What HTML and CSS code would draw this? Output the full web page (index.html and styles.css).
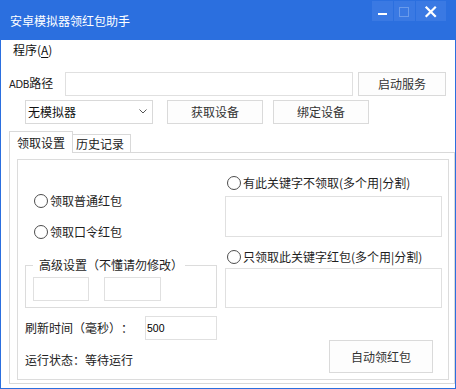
FILE: index.html
```html
<!DOCTYPE html>
<html>
<head>
<meta charset="utf-8">
<title>安卓模拟器领红包助手</title>
<link rel="stylesheet" href="styles.css">
</head>
<body>
<div class="window">
  <div class="titlebar">
    <div class="title">安卓模拟器领红包助手</div>
    <div class="caps">
      <div class="cap cap-min"><svg width="21" height="20" viewBox="0 0 21 20"><rect x="6" y="12" width="9" height="2" fill="#fff"/></svg></div>
      <div class="cap cap-max"><svg width="21" height="20" viewBox="0 0 21 20"><rect x="5.5" y="6.5" width="9" height="9" fill="none" stroke="#6b9bea" stroke-width="1"/></svg></div>
      <div class="cap cap-close"><svg width="30" height="20" viewBox="0 0 30 20"><path d="M10.5 6.5 L19 15 M19 6.5 L10.5 15" stroke="#fff" stroke-width="2.2" stroke-linecap="square"/></svg></div>
    </div>
  </div>
  <div class="menubar"><span class="menu-item">程序(<u>A</u>)</span></div>
  <div class="content">
    <div class="row row-adb">
      <div class="adb-label"><span class="narrow">ADB</span>路径</div>
      <div class="textbox tb-adb"></div>
      <div class="btn btn-start">启动服务</div>
    </div>
    <div class="row row-device">
      <div class="combo"><span class="combo-text">无模拟器</span><svg class="chev" width="8" height="5" viewBox="0 0 8 5"><path d="M0.5 0.5 L4 4 L7.5 0.5" fill="none" stroke="#555" stroke-width="1"/></svg></div>
      <div class="btn btn-get">获取设备</div>
      <div class="btn btn-bind">绑定设备</div>
    </div>
    <div class="tabs">
      <div class="tabstrip">
        <div class="tab tab-active">领取设置</div>
        <div class="tab tab-second">历史记录</div>
      </div>
      <div class="tabpage">
        <div class="frame">
          <div class="columns">
            <div class="col-left">
              <div class="radio radio-1"><span class="circle"></span><span>领取普通红包</span></div>
              <div class="radio radio-2"><span class="circle"></span><span>领取口令红包</span></div>
              <fieldset class="group">
                <legend class="group-title">高级设置<span class="fw fw-open">（</span>不懂请勿修改<span class="fw fw-close">）</span></legend>
                <div class="group-row">
                  <div class="textbox tb-small1"></div>
                  <div class="textbox tb-small2"></div>
                </div>
              </fieldset>
            </div>
            <div class="col-right">
              <div class="radio radio-3"><span class="circle"></span><span>有此关键字不领取(多个用|分割)</span></div>
              <div class="textbox area area-1"></div>
              <div class="radio radio-4"><span class="circle"></span><span>只领取此关键字红包(多个用|分割)</span></div>
              <div class="textbox area area-2"></div>
            </div>
          </div>
          <div class="bottom">
            <div class="refresh-row">
              <span class="refresh-label">刷新时间<span class="fw fw-open">（</span>毫秒<span class="fw fw-close">）</span><span class="fw fw-close">：</span></span>
              <div class="textbox tb-refresh"><span class="num">500</span></div>
            </div>
            <div class="status-row">
              <span class="status-label">运行状态<span class="fw fw-close">：</span>等待运行</span>
              <div class="btn btn-auto">自动领红包</div>
            </div>
          </div>
        </div>
      </div>
    </div>
  </div>
</div>
</body>
</html>
```

FILE: styles.css
```css
* { box-sizing: border-box; }
html, body { margin: 0; padding: 0; background: #fff; }
body {
  font-family: "Noto Sans CJK SC", "Noto Sans", sans-serif;
  font-size: 12px;
  color: #1e1e1e;
  text-spacing-trim: space-all;
  font-feature-settings: "chws" 0, "halt" 0, "palt" 0;
}
.fw { display: inline-block; width: 12px; }
.fw-open { text-align: right; }
.fw-close { text-align: left; }
.window {
  width: 456px;
  height: 389px;
  border: 1px solid #2b6fdf;
  border-top: none;
  display: flex;
  flex-direction: column;
  background: #fff;
  overflow: hidden;
}
.titlebar {
  height: 40px;
  flex: none;
  background: #2b6fdf;
  margin: 0 -1px;
  padding: 0 10px 0 10px;
  display: flex;
  align-items: flex-start;
}
.title {
  flex: 1;
  color: #fff;
  font-size: 12px;
  line-height: 16px;
  margin-top: 13px;
}
.caps { display: flex; gap: 1px; margin-top: 1px; }
.cap { width: 21px; height: 20px; background: #3a79e3; display: flex; }
.cap-close { width: 30px; }
.cap svg { display: block; }

.menubar {
  height: 22px;
  flex: none;
  padding-left: 12px;
  line-height: 20px;
  color: #111;
}
.menu-item u { text-decoration-thickness: 1px; text-underline-offset: 2px; }

.content { display: flex; flex-direction: column; flex: 1; }
.row { display: flex; align-items: center; height: 24px; flex: none; }
.row-adb { margin-top: 10px; }
.row-device { margin-top: 4px; }

.adb-label { width: 56px; margin-left: 8px; color: #222; line-height: 16px; }
.narrow {
  font-family: "Liberation Sans Narrow", "DejaVu Sans Condensed", "Liberation Sans", sans-serif;
  font-size: 11px;
  letter-spacing: -0.3px;
}
.textbox { border: 1px solid #e0e0e0; background: #fff; }
.tb-adb { width: 288px; height: 24px; }
.btn {
  border: 1px solid #dadada;
  background: #fdfdfd;
  color: #333;
  display: flex;
  align-items: center;
  justify-content: center;
  height: 24px;
  line-height: 16px;
}
.btn-start { width: 88px; margin-left: 5px; }

.combo {
  width: 128px;
  height: 24px;
  margin-left: 24px;
  border: 1px solid #d9d9d9;
  display: flex;
  align-items: center;
  padding-left: 2px;
  padding-right: 5px;
  color: #111;
}
.combo-text { flex: 1; line-height: 16px; }
.chev { display: block; margin-top: -1px; }
.btn-get { width: 96px; margin-left: 14px; }
.btn-bind { width: 96px; margin-left: 10px; }

.tabs {
  margin-top: 7px;
  margin-left: 8px;
  display: flex;
  flex-direction: column;
  flex: none;
}
.tabstrip { display: flex; align-items: flex-end; height: 21px; position: relative; z-index: 1; }
.tab {
  border: 1px solid #d9d9d9;
  border-bottom: none;
  background: #fff;
  line-height: 16px;
  color: #222;
}
.tab-active { width: 64px; height: 22px; margin-bottom: -1px; padding: 3px 0 0 7px; }
.tab-second { width: 58px; height: 18px; border-left: none; padding: 1px 0 0 3px; }

.tabpage {
  border: 1px solid #d9d9d9;
  height: 232px;
  width: 446px;
  padding: 6px 5px 3px 7px;
}
.frame {
  border: 1px solid #dcdcdc;
  height: 221px;
  display: flex;
  flex-direction: column;
}
.columns { display: flex; gap: 8px; padding: 15px 0 0 7px; }
.col-left { width: 192px; display: flex; flex-direction: column; }
.col-right { width: 217px; display: flex; flex-direction: column; }

.radio { display: flex; align-items: center; height: 16px; line-height: 16px; color: #1e1e1e; }
.circle {
  width: 14px;
  height: 14px;
  border: 1px solid #4d4d4d;
  border-radius: 50%;
  background: #fff;
  margin-right: 2px;
  flex: none;
}
.radio-1 { margin-top: 18px; padding-left: 9px; }
.radio-2 { margin-top: 15px; padding-left: 9px; }
.radio-3 { padding-left: 2px; }
.radio-4 { margin-top: 12px; padding-left: 2px; }

.group {
  margin: 17px 0 0 0;
  padding: 4px 0 6px 7px;
  border: 1px solid #dcdcdc;
  min-width: 0;
}
.group-title { padding: 0 2px 0 6px; line-height: 16px; color: #1e1e1e; }
.group-row { display: flex; gap: 15px; }
.tb-small1 { width: 56px; height: 24px; }
.tb-small2 { width: 57px; height: 24px; }

.area { width: 217px; }
.area-1 { margin-top: 5px; height: 41px; }
.area-2 { margin-top: 3px; height: 40px; }

.bottom { padding: 8px 15px 0 7px; display: flex; flex-direction: column; }
.refresh-row { display: flex; align-items: center; height: 24px; }
.refresh-label { width: 120px; line-height: 16px; color: #222; }
.tb-refresh { width: 72px; height: 24px; display: flex; align-items: center; padding-left: 1px; }
.num { font-family: "Liberation Sans", sans-serif; font-size: 10.5px; color: #000; }
.status-row { display: flex; justify-content: space-between; align-items: flex-start; }
.status-label { margin-top: 12px; line-height: 16px; color: #222; }
.btn-auto { width: 104px; height: 33px; }
```
